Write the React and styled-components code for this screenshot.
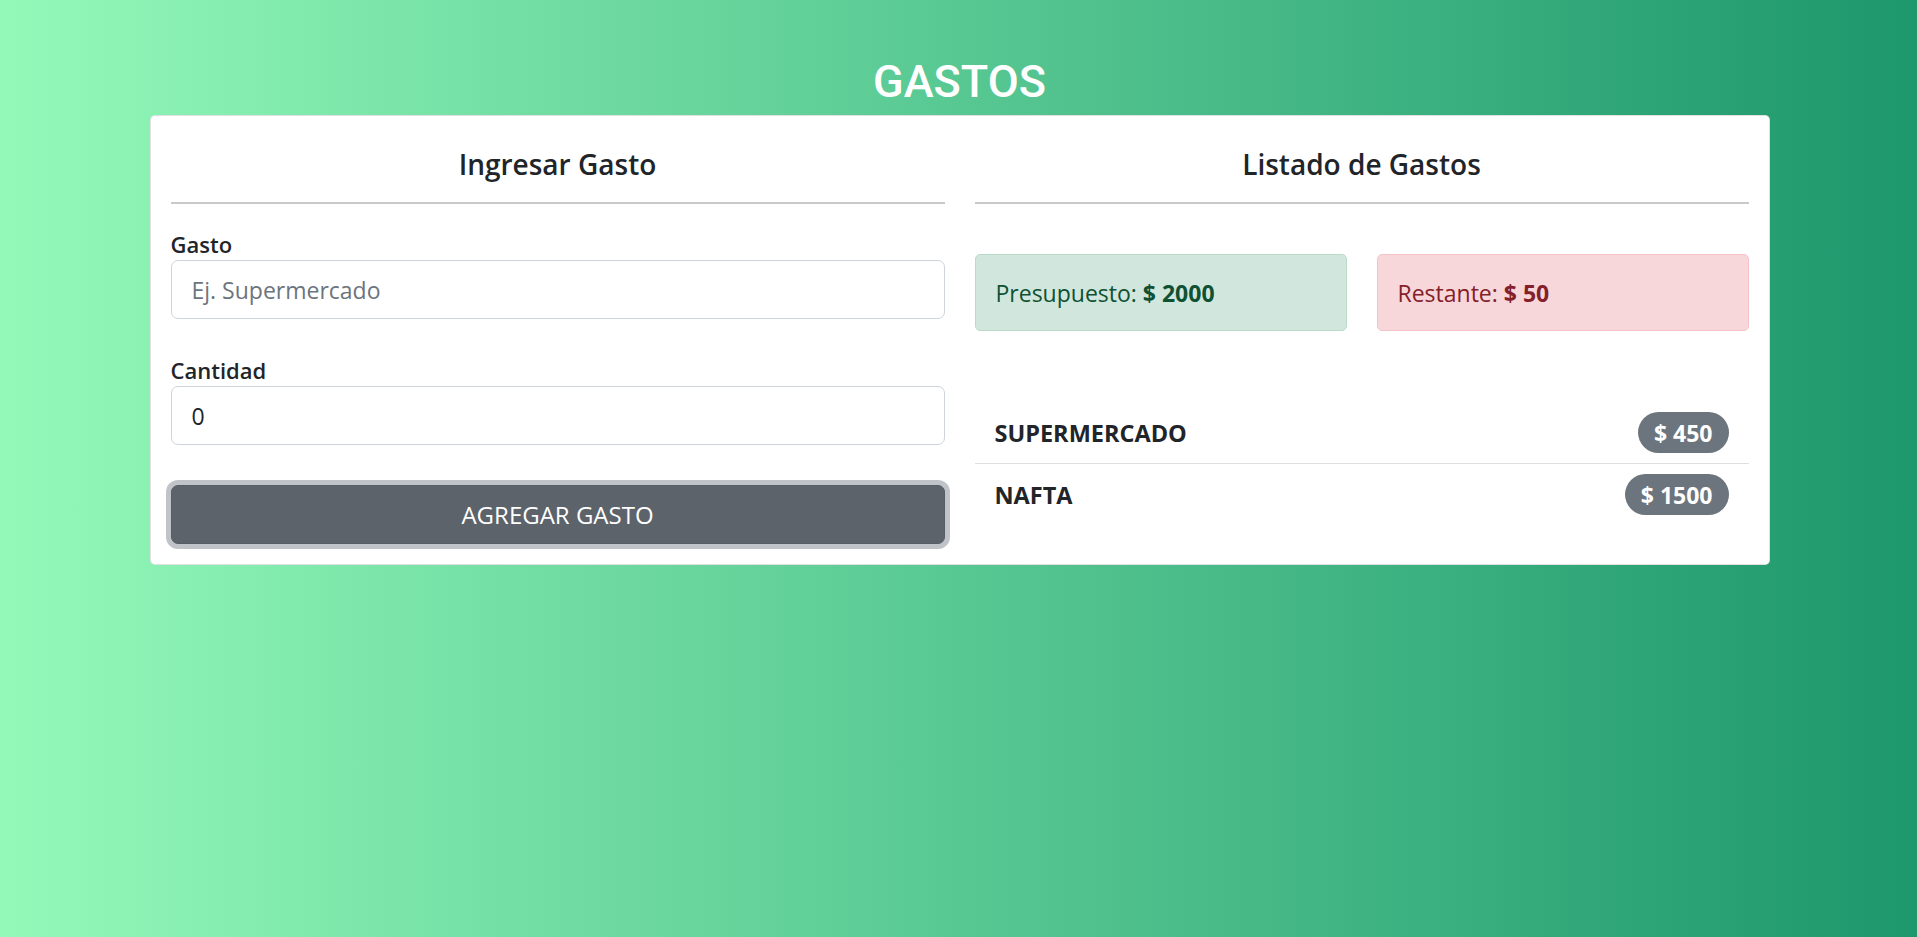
import React, { useState } from 'react';
import styled, { createGlobalStyle } from 'styled-components';

const GlobalStyle = createGlobalStyle`
  html, body {
    margin: 0;
    min-height: 100%;
  }
  body {
    min-height: 100vh;
    background: linear-gradient(to right, #93f9b9, #1d976c);
    font-family: 'Open Sans', 'Noto Sans', sans-serif;
    color: #212529;
  }
  * { box-sizing: border-box; }
`;

const Page = styled.div`
  padding: 56px 0 0 2px;
`;

const Title = styled.h1`
  margin: 0 0 7px;
  text-align: center;
  font-family: Roboto, 'Liberation Sans', sans-serif;
  font-weight: 500;
  font-size: 45px;
  line-height: 52px;
  color: #fff;
`;

const Card = styled.div`
  width: 1620px;
  margin: 0 auto;
  background: #fff;
  border: 1px solid rgba(0, 0, 0, 0.12);
  border-radius: 5px;
  padding: 20px;
  display: grid;
  grid-template-columns: 1fr 1fr;
  column-gap: 30px;
  align-items: start;
`;

const Column = styled.div`
  display: flex;
  flex-direction: column;
`;

const Heading = styled.h2`
  margin: 10px 0 0;
  text-align: center;
  font-size: 28px;
  font-weight: 600;
  line-height: 36px;
`;

const Rule = styled.hr`
  margin: 20px 0 0;
  border: 0;
  height: 2px;
  background: #c9c9c9;
`;

const Field = styled.div`
  display: flex;
  flex-direction: column;
  gap: 1px;
  margin-top: ${p => p.$top}px;
`;

const Label = styled.label`
  font-size: 22px;
  font-weight: 600;
  line-height: 30px;
`;

const Input = styled.input`
  height: 59px;
  padding: 0 20px;
  border: 1px solid #ced4da;
  border-radius: 7px;
  font-family: inherit;
  font-size: 23px;
  color: #212529;
  outline: none;
  &::placeholder { color: #6c757d; }
`;

const Submit = styled.button`
  margin-top: 40px;
  height: 59px;
  border: 1px solid #565e64;
  border-radius: 7px;
  background: #5c636a;
  color: #fff;
  font-family: inherit;
  font-size: 24px;
  text-transform: uppercase;
  box-shadow: 0 0 0 5px rgba(130, 138, 145, 0.5);
  cursor: pointer;
`;

const Alerts = styled.div`
  margin-top: 50px;
  display: grid;
  grid-template-columns: 1fr 1fr;
  column-gap: 30px;
`;

const Alert = styled.div`
  padding: 22px 20px 20px;
  border-radius: 5px;
  font-size: 23px;
  line-height: 33px;
  background: ${p => (p.$tone === 'danger' ? '#f8d7da' : '#d1e7dd')};
  border: 1px solid ${p => (p.$tone === 'danger' ? '#f5c2c7' : '#badbcc')};
  color: ${p => (p.$tone === 'danger' ? '#842029' : '#0f5132')};
  b { font-weight: 700; }
`;

const List = styled.ul`
  list-style: none;
  margin: 71px 0 0;
  padding: 0;
`;

const Item = styled.li`
  display: flex;
  justify-content: space-between;
  align-items: center;
  padding: 10px 20px;
  font-size: 23.5px;
  font-weight: 700;
  text-transform: uppercase;
  & + & { border-top: 1px solid #dfdfdf; }
`;

const Badge = styled.span`
  height: 41px;
  display: inline-flex;
  align-items: center;
  padding: 0 16px;
  border-radius: 21px;
  background: #6c757d;
  color: #fff;
  font-size: 23px;
  font-weight: 700;
`;

export default function App() {
  const [gastos] = useState([
    { id: 1, nombre: 'Supermercado', cantidad: 450 },
    { id: 2, nombre: 'Nafta', cantidad: 1500 },
  ]);
  const presupuesto = 2000;
  const restante = 50;

  return (
    <>
      <GlobalStyle />
      <Page>
        <Title>GASTOS</Title>
        <Card>
          <Column>
            <Heading>Ingresar Gasto</Heading>
            <Rule />
            <Field $top={25}>
              <Label>Gasto</Label>
              <Input type="text" placeholder="Ej. Supermercado" />
            </Field>
            <Field $top={36}>
              <Label>Cantidad</Label>
              <Input type="number" defaultValue="0" />
            </Field>
            <Submit type="button">Agregar Gasto</Submit>
          </Column>
          <Column>
            <Heading>Listado de Gastos</Heading>
            <Rule />
            <Alerts>
              <Alert>Presupuesto: <b>$ {presupuesto}</b></Alert>
              <Alert $tone="danger">Restante: <b>$ {restante}</b></Alert>
            </Alerts>
            <List>
              {gastos.map(g => (
                <Item key={g.id}>
                  {g.nombre}
                  <Badge>$ {g.cantidad}</Badge>
                </Item>
              ))}
            </List>
          </Column>
        </Card>
      </Page>
    </>
  );
}
